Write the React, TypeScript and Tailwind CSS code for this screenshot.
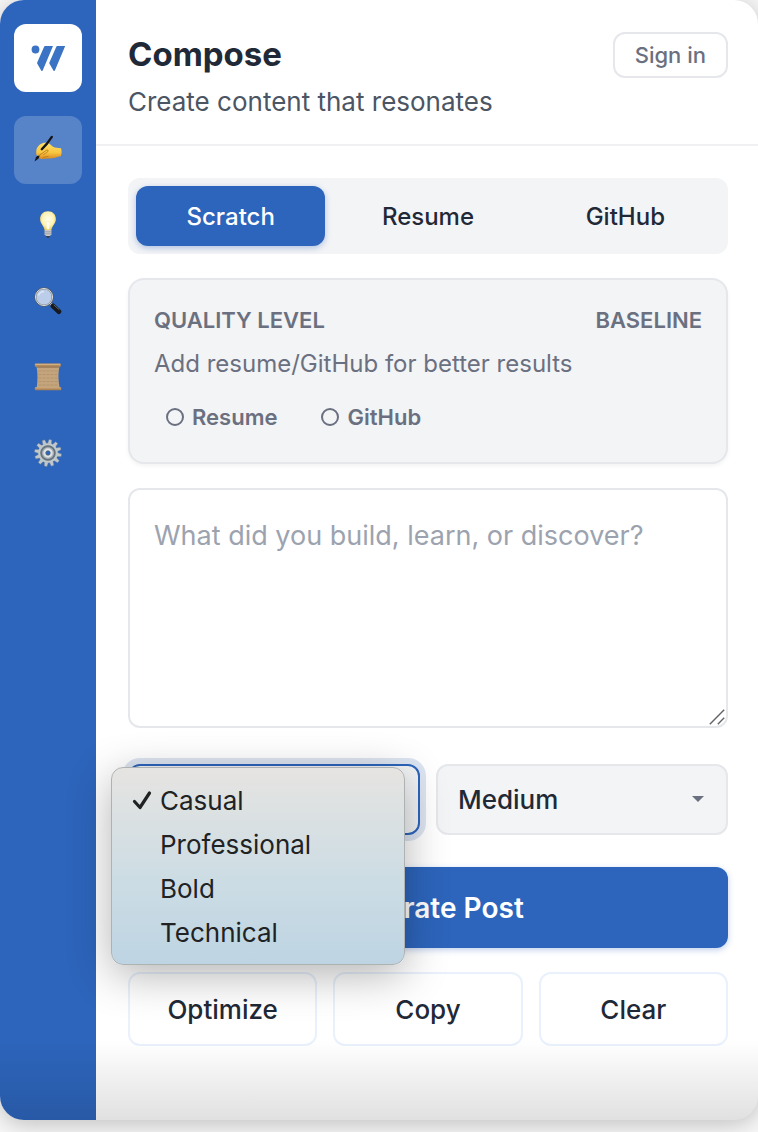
import { useState } from "react";
import type { ReactNode } from "react";

function Logo() {
  return (
    <svg viewBox="0 0 36 28" className="h-7 w-9" aria-hidden="true">
      <circle cx="5.5" cy="5.500" r="3.900" fill="#3b74c4" />
      <path d="M15.500 2H23L12.800 26.300c-.4.9-1.100.9-1.600.1L7.300 19.800c-.3-.5-.3-.9 0-1.500L14 3c.3-.7.700-1 1.500-1z" fill="#3b74c4" />
      <path d="M27.700 2h7.500L25 26.300c-.4.9-1.100.9-1.600.1l-3.900-6.600c-.3-.5-.3-.9 0-1.500L26.200 3c.3-.7.700-1 1.500-1z" fill="#3b74c4" />
    </svg>
  );
}

function WritingHand() {
  return (
    <svg viewBox="0 0 28 28" className="h-7 w-7" aria-hidden="true">
      <defs>
        <linearGradient id="hand" x1="0" y1="0" x2="0" y2="1">
          <stop offset="0" stopColor="#ffe16b" />
          <stop offset=".6" stopColor="#f9c641" />
          <stop offset="1" stopColor="#d98a1f" />
        </linearGradient>
      </defs>
      <path d="M6.500 17.500 2 22.300.6 26.500 4.200 23.800 8 19z" fill="#151515" />
      <path
        d="M2.300 15.500C2.800 12 5.500 9 8.500 8.200c2.200-.6 5-.4 6.500.4 1 .6 2.500 2.200 4 3.200 2.500 1.200 5 1.200 8 1.500.9 2.500.8 5.500-.2 8-2.700.4-4 1.200-6.500 1.800-3 .6-6 .2-8.800.7-2.700.3-6 .1-6.300-1.400-.1-.7.6-1.200 1-1.800-1.700.5-3.600.1-3.900-1.200-.2-1.400.1-2.600 0-3.900z"
        fill="url(#hand)"
      />
      <path d="M5.500 19.800c2.500-.7 4-3 7-4.500 1.300-.6 2.200.2 1.300 1.300-1.500 1.600-3 1.700-4.500 3.400" fill="none" stroke="#b87518" strokeWidth=".9" />
      <path d="M8.500 23.200c1.700-1.300 3.500-1.500 6-1.700" fill="none" stroke="#b87518" strokeWidth=".8" />
      <path d="M17.800 1.900 13 8.600 7.800 14.200" fill="none" stroke="#151515" strokeWidth="2.400" strokeLinecap="round" strokeLinejoin="round" />
    </svg>
  );
}

function Bulb() {
  return (
    <svg viewBox="0 0 28 28" className="h-7 w-7" aria-hidden="true">
      <defs>
        <radialGradient id="bulb" cx=".5" cy=".42" r=".6">
          <stop offset="0" stopColor="#fffef0" />
          <stop offset=".6" stopColor="#fff3b5" />
          <stop offset="1" stopColor="#e5c34f" />
        </radialGradient>
      </defs>
      <path d="M14 .2c-4.700 0-7.900 3.400-7.900 7.700 0 4.300 3.700 6.400 4.500 11.300h6.800c.8-4.900 4.500-7 4.500-11.300C21.900 3.600 18.700.2 14 .2z" fill="url(#bulb)" />
      <path d="m12 10 .8 1.200L14 10.200l1.200 1L16 10l-.8 8.200h-2.400z" fill="#fffdf0" stroke="#f3e4a6" strokeWidth=".3" />
      <path d="M10.600 19h6.800v4.500l-1.500 1.500h-3.800l-1.500-1.500z" fill="#c6c8ca" />
      <path d="M10.600 20.800h6.800M10.600 22.800h6.800" stroke="#8f9294" strokeWidth=".7" />
      <path d="M11.900 25h4.200L14.800 27h-1.600z" fill="#39424d" />
    </svg>
  );
}

function Magnifier() {
  return (
    <svg viewBox="0 0 28 28" className="h-7 w-7" aria-hidden="true">
      <path d="m16.500 16.500 3 3" stroke="#c8c8c8" strokeWidth="2.500" />
      <path d="m19 19 5.800 5.500" stroke="#17191d" strokeWidth="5" strokeLinecap="round" />
      <path d="m20 18 5 4.500" stroke="#666d75" strokeWidth=".9" strokeLinecap="round" />
      <circle cx="10" cy="10" r="8.700" fill="#bccde9" stroke="#555d66" strokeWidth="2" />
      <circle cx="10" cy="10" r="8.500" fill="none" stroke="#e4e6e5" strokeWidth="1" />
      <path d="M4.500 8.500C5.400 5.800 7.500 4.500 10 4.500" fill="none" stroke="#dce7f8" strokeWidth="1.500" />
    </svg>
  );
}

function Scroll() {
  return (
    <svg viewBox="0 0 28 28" className="h-7 w-7" aria-hidden="true">
      <path d="M2.500 3h23c-1.300 6.500-1.500 13 .2 22h-23C3.700 18 3.800 10 2.500 3z" fill="#c3a47c" />
      <path d="M4.500 8h20M4.500 11.500H24M4.500 15H24M4.500 18.500H24M4.500 22h20" stroke="#b08f68" strokeWidth=".7" strokeDasharray="3 1" />
      <rect x=".8" y=".6" width="26" height="3.200" rx="1" fill="#b68b5b" />
      <path d="M1.200 1.300h25.200" stroke="#dfc49a" strokeWidth=".8" />
      <path d="M3 4.100h22" stroke="#73563a" strokeWidth=".7" />
      <rect x=".8" y="24.200" width="26.500" height="3" rx="1" fill="#ae8355" />
      <path d="M1.200 24.900h25.500" stroke="#dcc097" strokeWidth=".8" />
    </svg>
  );
}

function Gear() {
  const teeth = [0, 30, 60, 90, 120, 150, 180, 210, 240, 270, 300, 330];
  return (
    <svg viewBox="0 0 28 28" className="h-7 w-7" aria-hidden="true">
      {teeth.map((angle) => (
        <path key={angle} d="M12 5 12.700.5h2.600L16 5z" fill="#c1c8cc" stroke="#79848d" strokeWidth=".4" transform={`rotate(${angle + 10} 14 14)`} />
      ))}
      <circle cx="14" cy="14" r="8.800" fill="#a3adb3" stroke="#c3cacd" strokeWidth="2" />
      <circle cx="14" cy="14" r="6.900" fill="none" stroke="#67737d" strokeWidth="1.600" />
      <circle cx="14" cy="14" r="3.500" fill="#2d66bc" stroke="#dfe4e6" strokeWidth="2.400" />
      <circle cx="14" cy="14" r="2.200" fill="none" stroke="#53606d" strokeWidth=".8" />
    </svg>
  );
}

const navItems: { label: string; icon: ReactNode }[] = [
  { label: "Compose", icon: <WritingHand /> },
  { label: "Ideas", icon: <Bulb /> },
  { label: "Research", icon: <Magnifier /> },
  { label: "History", icon: <Scroll /> },
  { label: "Settings", icon: <Gear /> },
];

const tones = ["Casual", "Professional", "Bold", "Technical"];

function Sidebar() {
  return (
    <aside className="flex w-24 shrink-0 flex-col items-center gap-6 bg-[#2d65bc] py-6">
      <a href="#home" aria-label="Home" className="flex size-[68px] items-center justify-center rounded-xl bg-white">
        <Logo />
      </a>
      <nav className="flex flex-col gap-2">
        {navItems.map((item, i) => (
          <button
            key={item.label}
            type="button"
            aria-label={item.label}
            className={`flex size-[68px] items-center justify-center rounded-xl pb-0.5 ${i === 0 ? "bg-white/20" : ""}`}
          >
            {item.icon}
          </button>
        ))}
      </nav>
    </aside>
  );
}

function Source({ name }: { name: string }) {
  return (
    <span className="flex items-center gap-2">
      <span className="size-[18px] rounded-full border-2 border-[#6b7080]" />
      {name}
    </span>
  );
}

function ToneMenu({ value, onPick }: { value: string; onPick: (tone: string) => void }) {
  return (
    <div
      role="listbox"
      aria-label="Tone options"
      className="absolute top-[3px] right-[15px] -left-[17px] z-10 flex flex-col rounded-xl border border-[#aeb2b2] bg-linear-to-b from-[#e6e4e1] via-[#cbdce4] via-60% to-[#bed4e3] py-2.5 shadow-[0_10px_44px_rgba(0,0,0,0.3)]"
    >
      {tones.map((tone) => (
        <button
          key={tone}
          type="button"
          role="option"
          aria-selected={tone === value}
          onClick={() => onPick(tone)}
          className="flex h-11 items-center pl-5 text-left text-[26px] text-[#202224]"
        >
          <span className="w-7">
            {tone === value && (
              <svg viewBox="0 0 20 20" className="size-5" aria-hidden="true">
                <path d="M2.500 11.500 8 17.500 17.500 3" fill="none" stroke="#202224" strokeWidth="3.200" strokeLinecap="round" strokeLinejoin="round" />
              </svg>
            )}
          </span>
          {tone}
        </button>
      ))}
    </div>
  );
}

export default function App() {
  const [tab, setTab] = useState("Scratch");
  const [tone, setTone] = useState("Casual");
  const [open, setOpen] = useState(true);

  return (
    <div className="bg-[#f8f8f8] pb-3 font-['Inter','Liberation_Sans',sans-serif] text-[#1f2937]">
      <div className="relative flex min-h-[1120px] overflow-hidden rounded-3xl bg-white shadow-[0_4px_24px_rgba(0,0,0,0.24)]">
        <Sidebar />
        <main className="min-w-0 flex-1">
          <header className="flex items-start justify-between border-b-2 border-[#f0f0f2] pt-8 pr-[30px] pb-6 pl-8">
            <div>
              <h1 className="text-[33px] leading-[44px] font-bold">Compose</h1>
              <p className="mt-2 text-[26px] leading-9 text-[#4b5563]">Create content that resonates</p>
            </div>
            <button type="button" className="h-[46px] rounded-xl border-2 border-[#e5e7eb] px-5 text-[22px] font-medium text-[#6b7080]">
              Sign in
            </button>
          </header>

          <div className="flex flex-col gap-6 pt-8 pr-[30px] pb-8 pl-8">
            <div role="tablist" className="grid grid-cols-3 gap-2 rounded-xl bg-[#f3f4f6] p-2">
              {["Scratch", "Resume", "GitHub"].map((name) => (
                <button
                  key={name}
                  type="button"
                  role="tab"
                  aria-selected={tab === name}
                  onClick={() => setTab(name)}
                  className={`h-[60px] rounded-xl pt-0.5 text-2xl font-medium ${tab === name ? "bg-[#2d65bc] text-white shadow-[0_2px_6px_rgba(45,101,188,0.35)]" : ""}`}
                >
                  {name}
                </button>
              ))}
            </div>

            <section className="rounded-2xl border-2 border-[#e5e7eb] bg-[#f3f4f6] p-6 text-[#6b7080] shadow-[0_2px_4px_rgba(0,0,0,0.05)]">
              <div className="flex h-8 items-center justify-between text-[22px] font-semibold">
                <h2>QUALITY LEVEL</h2>
                <span>BASELINE</span>
              </div>
              <p className="mt-2 text-2xl leading-10">Add resume/GitHub for better results</p>
              <div className="mt-4 flex h-[38px] items-start gap-11 pl-3 text-[22px] leading-[34px] font-semibold">
                <Source name="Resume" />
                <Source name="GitHub" />
              </div>
            </section>

            <div className="relative">
              <textarea
                aria-label="Post idea"
                placeholder="What did you build, learn, or discover?"
                className="block h-60 w-full resize-none rounded-xl border-2 border-[#e5e7eb] bg-white px-6 py-6 text-[27px] leading-[44px] outline-none placeholder:text-[#9ca3af]"
              />
              <svg viewBox="0 0 16 16" className="pointer-events-none absolute right-[3px] bottom-[3px] size-4" aria-hidden="true">
                <path d="M.8 15.200 15.200.8M8.800 15.200l6.400-6.400" stroke="#606266" strokeWidth="1.400" fill="none" />
              </svg>
            </div>

            <div className="grid grid-cols-2 gap-4 pt-3 pb-2">
              <div className="relative">
                <select
                  aria-label="Tone"
                  value={tone}
                  onChange={(e) => setTone(e.target.value)}
                  onClick={() => setOpen(true)}
                  className="block h-[71px] w-full appearance-none rounded-xl border-2 border-[#2d65bc] bg-[#f3f4f6] px-5 text-[26px] font-medium shadow-[0_0_0_6px_#dde5f2] outline-none"
                >
                  {tones.map((t) => (
                    <option key={t}>{t}</option>
                  ))}
                </select>
                {open && (
                  <ToneMenu
                    value={tone}
                    onPick={(t) => {
                      setTone(t);
                      setOpen(false);
                    }}
                  />
                )}
              </div>
              <div className="relative">
                <select
                  aria-label="Length"
                  defaultValue="Medium"
                  className="block h-[71px] w-full appearance-none rounded-xl border-2 border-[#e5e7eb] bg-[#f3f4f6] px-5 text-[26px] font-medium outline-none"
                >
                  <option>Short</option>
                  <option>Medium</option>
                  <option>Long</option>
                </select>
                <svg viewBox="0 0 12 6" className="pointer-events-none absolute top-8 right-6 h-[6px] w-3" aria-hidden="true">
                  <path d="M0 0h12L6 6z" fill="#6b7080" />
                </svg>
              </div>
            </div>

            <button type="button" className="h-[81px] rounded-xl bg-[#2d65bc] text-[28px] font-semibold text-white shadow-[0_2px_6px_rgba(45,101,188,0.3)]">
              Generate Post
            </button>

            <div className="grid grid-cols-3 gap-4">
              {["Optimize", "Copy", "Clear"].map((name) => (
                <button key={name} type="button" className="h-[74px] rounded-xl border-2 border-[#e8f1fc] bg-white text-[26px] font-medium">
                  {name}
                </button>
              ))}
            </div>
          </div>
        </main>
        <div className="pointer-events-none absolute inset-x-0 bottom-0 h-20 bg-linear-to-b from-transparent to-black/12" />
      </div>
    </div>
  );
}
